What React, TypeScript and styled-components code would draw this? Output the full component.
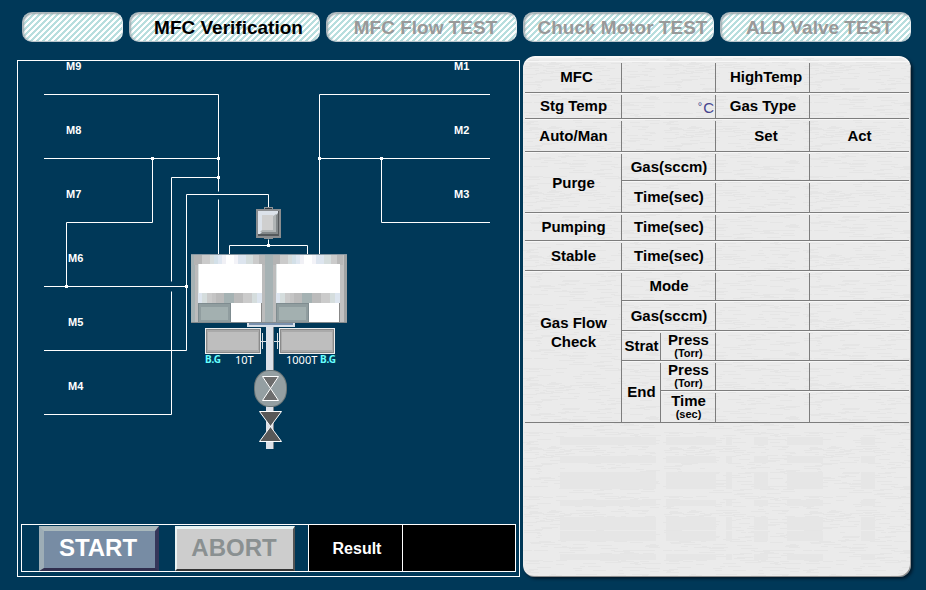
import React from 'react';
import styled, { createGlobalStyle, css } from 'styled-components';

const NAVY = '#003858';
const LINE = '#7d7d7d';
const SANS = '"Liberation Sans", Arial, sans-serif';

/* Fine horizontal streaks that give the data panel its brushed-paper look. */
const paperTexture = (() => {
  let seed = 7;
  const next = (n: number) => {
    seed = (seed * 1103515245 + 12345) % 2147483648;
    return Math.floor((seed / 2147483648) * n);
  };
  let dashes = '';
  for (let i = 0; i < 190; i += 1) {
    dashes += `<rect x='${next(128)}' y='${next(64)}' width='${4 + next(14)}' height='1'/>`;
  }
  return `url("data:image/svg+xml,<svg xmlns='http://www.w3.org/2000/svg' width='140' height='64' fill='%23e5e5e5'>${dashes}</svg>")`;
})();

const GlobalStyle = createGlobalStyle`
  *, *::before, *::after { box-sizing: border-box; }
  body { margin: 0; background: ${NAVY}; font-family: ${SANS}; }
`;

const Page = styled.div`
  min-height: 100vh;
  padding: 12px 15px 13px 17px;
  background: ${NAVY};
`;

const TabBar = styled.nav`
  display: grid;
  grid-template-columns: 101fr repeat(4, 191fr);
  gap: 6px;
  padding-left: 5px;
`;

const Tab = styled.button<{ $active?: boolean }>`
  height: 30px;
  padding: 2px 0 0 8px;
  border: 1px solid #a9b4ba;
  border-right-color: #e6eef0;
  border-bottom-color: #b9c6cc;
  border-radius: 10px;
  background: linear-gradient(135deg, #b8dede 0 10%, #fff 10% 40%, #b8dede 40% 60%, #fff 60% 90%, #b8dede 90%) 0 0 / 6px 6px;
  box-shadow: inset 1px 1px 2px #9aa5aa;
  color: ${(p) => (p.$active ? '#000' : '#999')};
  font: bold 19px/26px ${SANS};
  white-space: nowrap;
`;

const Columns = styled.main`
  display: grid;
  grid-template-columns: 503fr 388fr;
  gap: 3px;
  margin-top: 14px;
`;

const FlowPanel = styled.section`
  display: flex;
  flex-direction: column;
  margin-top: 4px;
  border: 1px solid #fff;
`;

const Diagram = styled.svg`
  display: block;
  width: 100%;
  height: auto;
`;

const ActionBar = styled.div`
  display: grid;
  grid-template-columns: 286fr 94fr 113fr;
  height: 48px;
  margin: 0 3px 4px;
  border: 1px solid #fff;
`;

const Actions = styled.div`
  display: flex;
  justify-content: space-between;
  padding: 1px 13px 0 17px;
`;

const ActionButton = styled.button<{ $kind: 'start' | 'abort' }>`
  width: 120px;
  height: 45px;
  border-style: solid;
  font: bold 24px/34px ${SANS};
  ${(p) =>
    p.$kind === 'start'
      ? css`
          padding: 0 3px 3px 0;
          border-width: 5px 4px 3px 5px;
          border-color: #a9b8bc #34365a #302e4e #9dadb6;
          background: #778ca4;
          color: #fff;
        `
      : css`
          padding: 0 2px 2px 0;
          border-width: 3px 2px 2px 2px;
          border-color: #e8f4f4 #555 #333 #eaf2f2;
          background: #cdcdcd;
          color: #8a9091;
        `}
`;

const ResultCell = styled.div`
  padding: 2px 0 0 3px;
  border-left: 1px solid #fff;
  background: #000;
  color: #fff;
  font: bold 16px/44px ${SANS};
  text-align: center;
`;

const DataPanel = styled.section`
  padding: 5px 2px 8px;
  border-radius: 12px;
  background: #ebebeb ${paperTexture};
  box-shadow: inset 0 2px 1px #f8f8f8, inset -1px -1px 0 #8d8d8d, 2px 2px 3px #001a2c;
`;

const DataTable = styled.table`
  width: 100%;
  table-layout: fixed;
  border-collapse: separate;
  border-spacing: 0;
  font: bold 15px/19px ${SANS};
  color: #000;
  text-align: center;
`;

const Row = styled.tr<{ $h: number }>`
  height: ${(p) => p.$h}px;
`;

const cellStyle = css`
  padding: 0;
  border-bottom: 1px solid ${LINE};
  box-shadow: inset 0 1px 0 #f7f7f7;
  background: linear-gradient(${LINE}, ${LINE}) right 0 top 2px / 1px 100% no-repeat;
  font-weight: bold;
  white-space: nowrap;
`;

const Head = styled.th<{ $lift?: boolean; $inset?: boolean }>`
  ${cellStyle}
  padding-bottom: ${(p) => (p.$lift ? '30px' : '0')};
  padding-left: ${(p) => (p.$inset ? '6px' : '0')};
`;

const Value = styled.td<{ $last?: boolean }>`
  ${cellStyle}
  ${(p) => p.$last && 'background: none;'}
`;

const Unit = styled.span`
  display: block;
  padding: 4px 2px 0 0;
  color: #45458f;
  font-weight: normal;
  text-align: right;
`;

const Degree = styled.span`
  margin-right: 1px;
  font-size: 11px;
  line-height: 11px;
  vertical-align: 3px;
`;

const Stacked = styled.span`
  display: block;
  line-height: 14px;
`;

const Small = styled.small`
  display: block;
  font-size: 11px;
  line-height: 12px;
`;

const Streaks = styled.svg`
  display: block;
  width: 100%;
  height: 140px;
`;

const MLabel = styled.text`
  fill: #fff;
  font: bold 11px ${SANS};
`;

const RangeLabel = styled.text`
  fill: #fff;
  font: 11px "Noto Sans", sans-serif;
`;

const GaugeLabel = styled.text`
  fill: #6ff;
  font: bold 10px "Noto Sans", sans-serif;
`;

const TOP_BAND: [number, number, string][] = [
  [-4, 8, '#b4b4b4'], [4, 8, '#cbcbcb'], [12, 4, '#d6dcdc'], [16, 4, '#d3e0e8'], [20, 4, '#dfe7f1'],
  [24, 4, '#f0f0f5'], [28, 8, '#ffffff'], [36, 4, '#f3f3f8'], [40, 8, '#dde5ef'], [48, 7, '#d5dddd'],
  [55, 6, '#cbcbcb'], [61, 6, '#b8b8b8'],
];

const LOW_BAND: [number, number, string][] = [
  [0, 4, '#dde5ef'], [4, 5, '#d5dddd'], [9, 5, '#cbcbcb'], [14, 4, '#c4c4c4'], [18, 8, '#bbbbbb'],
  [26, 10, '#a5b2b3'], [36, 9, '#bbbbbb'], [45, 9, '#cbcbcb'], [54, 5, '#d5dddd'], [59, 5, '#dde5ef'],
];

function Chamber({ x }: { x: number }) {
  return (
    <g transform={`translate(${x} 0)`}>
      {TOP_BAND.map(([bx, w, fill]) => (
        <rect key={bx} x={bx} y={255} width={w} height={10} fill={fill} />
      ))}
      <rect x={0} y={264} width={64} height={29} fill="#fff" />
      <rect x={0} y={264} width={1} height={59} fill="#dfe6e6" />
      {LOW_BAND.map(([bx, w, fill]) => (
        <rect key={bx} x={bx} y={293} width={w} height={10} fill={fill} />
      ))}
      <rect x={0} y={303} width={33} height={20} fill="#7f8c90" />
      <rect x={1} y={304} width={31} height={18} fill="#909d9f" />
      <rect x={3} y={307} width={27} height={13} fill="#a3b0b0" />
      <rect x={33} y={303} width={30} height={19} fill="#fff" />
      <rect x={63} y={303} width={1} height={20} fill="#888" />
    </g>
  );
}

function Gauge({ x }: { x: number }) {
  return (
    <g>
      <rect x={x} y={328} width={56} height={26} fill="#eee" />
      <rect x={x + 1} y={329} width={54} height={24} fill="#8a8a8a" />
      <rect x={x + 2} y={330} width={52} height={22} fill="#aaa" />
      <rect x={x + 3} y={332} width={50} height={18} fill="#bebebe" />
    </g>
  );
}

const NODES = [[218, 158], [152, 158], [218, 177], [66, 286], [186, 286], [268, 245], [319, 158], [381, 158]];

const M_LABELS: [string, number, number][] = [
  ['M9', 66, 70], ['M8', 66, 134], ['M7', 66, 198], ['M6', 68, 262], ['M5', 68, 326], ['M4', 68, 390],
  ['M1', 454, 70], ['M2', 454, 134], ['M3', 454, 198],
];

function FlowDiagram() {
  return (
    <Diagram viewBox="18 61 501 463" role="img" aria-label="Gas flow diagram">
      <path
        transform="translate(.5 .5)"
        fill="none"
        stroke="#fff"
        strokeWidth="1"
        d="M43.5 94H218V191M218 199V254M43.5 158H218M152 158V222H66V286M218 177H171V281M171 291V414H43.5
           M268 207V194H186V350H43.5M43.5 286H186M268 239V245M229 254V245H307V254
           M489.5 94H319V254M319 158H489.5M381 158V222H489.5"
      />
      {NODES.map(([x, y]) => (
        <rect key={`${x}-${y}`} x={x - 1} y={y - 1} width={3} height={3} fill="#fff" />
      ))}
      {M_LABELS.map(([label, x, y]) => (
        <MLabel key={label} x={x} y={y}>{label}</MLabel>
      ))}

      {/* inlet valve */}
      <rect x={264} y={207} width={9} height={3} fill="#8e9498" />
      <rect x={265} y={208} width={7} height={1} fill="#333c44" />
      <rect x={264} y={236} width={9} height={3} fill="#8e9498" />
      <rect x={265} y={237} width={7} height={1} fill="#000" />
      <rect x={256} y={209} width={25} height={29} fill="#8a8d90" />
      <rect x={258} y={211} width={21} height={25} fill="#55595c" />
      <rect x={258} y={211} width={20} height={23} fill="#dce2ea" />
      <path d="M278 213V234H260L262 232H276V215Z" fill="#84898b" />
      <path d="M276 214V232H260L263 229H273V216Z" fill="#b0b4b5" />
      <rect x={262} y={215} width={11} height={15} fill="#cfcfcf" />

      {/* twin chamber */}
      <rect x={191} y={254} width={156} height={69} fill="#a6b2b4" />
      <rect x={191} y={254} width={156} height={1} fill="#8797a2" />
      <rect x={195} y={255} width={3} height={68} fill="#bcbcbc" />
      <rect x={262} y={255} width={4} height={68} fill="#bcbcbc" />
      <rect x={273} y={255} width={3} height={68} fill="#bcbcbc" />
      <rect x={340} y={255} width={4} height={68} fill="#c2c2c2" />
      <rect x={344} y={255} width={3} height={68} fill="#a0a3a4" />
      <Chamber x={198} />
      <Chamber x={276} />
      <rect x={265} y={255} width={8} height={68} fill="#a6b2b4" />
      <rect x={191} y={322} width={156} height={1} fill="#858b8e" />

      {/* exhaust line and gauges */}
      <rect x={247} y={323} width={48} height={4} fill="#d7dfe8" />
      <rect x={249} y={323} width={44} height={2} fill="#7990ad" />
      <Gauge x={205} />
      <Gauge x={279} />
      <path d="M262.5 333V349M277.5 333V349M261 341.5H279" stroke="#dfe3e6" fill="none" />
      <rect x={266} y={327} width={8} height={122} fill="#7d858b" />
      <rect x={266} y={327} width={7} height={122} fill="#dde1e8" />
      <rect x={254} y={370} width={33} height={37} rx={15} ry={17} fill="#6c7779" />
      <rect x={255} y={371} width={31} height={35} rx={14} ry={16} fill="#949fa2" />
      <path d="M262.5 376.5H278.5L262.5 400.5H278.5Z" fill="#6d6d6d" stroke="#fff" />
      <path d="M259.5 411.5H281.5L259.5 441.5H281.5Z" fill="#585858" stroke="#fff" />

      <GaugeLabel x={205} y={363}>B.G</GaugeLabel>
      <RangeLabel x={235} y={364}>10T</RangeLabel>
      <RangeLabel x={286} y={364}>1000T</RangeLabel>
      <GaugeLabel x={320} y={363}>B.G</GaugeLabel>
    </Diagram>
  );
}

function SetAct() {
  return (
    <>
      <Value />
      <Value $last />
    </>
  );
}

function PaperStreaks() {
  const bars: [number, number][] = [[14, 8], [33, 7], [49, 17], [77, 6], [94, 13], [108, 10], [131, 6]];
  return (
    <Streaks viewBox="0 0 384 140" preserveAspectRatio="none" aria-hidden="true" fill="#e6e6e6">
      {bars.map(([y, h]) => (
        <g key={y}>
          <rect x={35} y={y} width={96} height={h} />
          <rect x={141} y={y} width={50} height={h} />
          <rect x={201} y={y} width={6} height={h} />
          <rect x={229} y={y} width={14} height={h} />
          <rect x={262} y={y} width={36} height={h} />
          <rect x={336} y={y} width={14} height={h} />
        </g>
      ))}
    </Streaks>
  );
}

export default function App() {
  return (
    <Page>
      <GlobalStyle />
      <TabBar aria-label="Tests">
        <Tab type="button" aria-label="Menu" />
        <Tab type="button" $active aria-current="page">MFC Verification</Tab>
        <Tab type="button">MFC Flow TEST</Tab>
        <Tab type="button">Chuck Motor TEST</Tab>
        <Tab type="button">ALD Valve TEST</Tab>
      </TabBar>
      <Columns>
        <FlowPanel>
          <FlowDiagram />
          <ActionBar>
            <Actions>
              <ActionButton type="button" $kind="start">START</ActionButton>
              <ActionButton type="button" $kind="abort" disabled>ABORT</ActionButton>
            </Actions>
            <ResultCell>Result</ResultCell>
            <ResultCell as="output" aria-label="Result" />
          </ActionBar>
        </FlowPanel>
        <DataPanel>
          <DataTable>
            <colgroup>
              <col width="97" />
              <col width="39" />
              <col width="55" />
              <col width="94" />
              <col width="99" />
            </colgroup>
            <tbody>
              <Row $h={32}>
                <Head scope="row" $inset>MFC</Head>
                <Value colSpan={2} />
                <Head scope="row" $inset>HighTemp</Head>
                <Value $last />
              </Row>
              <Row $h={26}>
                <Head scope="row">Stg Temp</Head>
                <Value colSpan={2}><Unit><Degree>°</Degree>C</Unit></Value>
                <Head scope="row">Gas Type</Head>
                <Value $last />
              </Row>
              <Row $h={33}>
                <Head scope="row">Auto/Man</Head>
                <Value colSpan={2} />
                <Head scope="col" $inset>Set</Head>
                <Value as="th" scope="col" $last>Act</Value>
              </Row>
              <Row $h={29}>
                <Head scope="rowgroup" rowSpan={2}>Purge</Head>
                <Head scope="row" colSpan={2}>Gas(sccm)</Head>
                <SetAct />
              </Row>
              <Row $h={32}>
                <Head scope="row" colSpan={2}>Time(sec)</Head>
                <SetAct />
              </Row>
              <Row $h={28}>
                <Head scope="row">Pumping</Head>
                <Head scope="row" colSpan={2}>Time(sec)</Head>
                <SetAct />
              </Row>
              <Row $h={30}>
                <Head scope="row">Stable</Head>
                <Head scope="row" colSpan={2}>Time(sec)</Head>
                <SetAct />
              </Row>
              <Row $h={30}>
                <Head scope="rowgroup" rowSpan={5} $lift>Gas Flow<br />Check</Head>
                <Head scope="row" colSpan={2}>Mode</Head>
                <SetAct />
              </Row>
              <Row $h={30}>
                <Head scope="row" colSpan={2}>Gas(sccm)</Head>
                <SetAct />
              </Row>
              <Row $h={30}>
                <Head scope="row">Strat</Head>
                <Head scope="row"><Stacked>Press<Small>(Torr)</Small></Stacked></Head>
                <SetAct />
              </Row>
              <Row $h={30}>
                <Head scope="rowgroup" rowSpan={2}>End</Head>
                <Head scope="row"><Stacked>Press<Small>(Torr)</Small></Stacked></Head>
                <SetAct />
              </Row>
              <Row $h={32}>
                <Head scope="row"><Stacked>Time<Small>(sec)</Small></Stacked></Head>
                <SetAct />
              </Row>
            </tbody>
          </DataTable>
          <PaperStreaks />
        </DataPanel>
      </Columns>
    </Page>
  );
}
